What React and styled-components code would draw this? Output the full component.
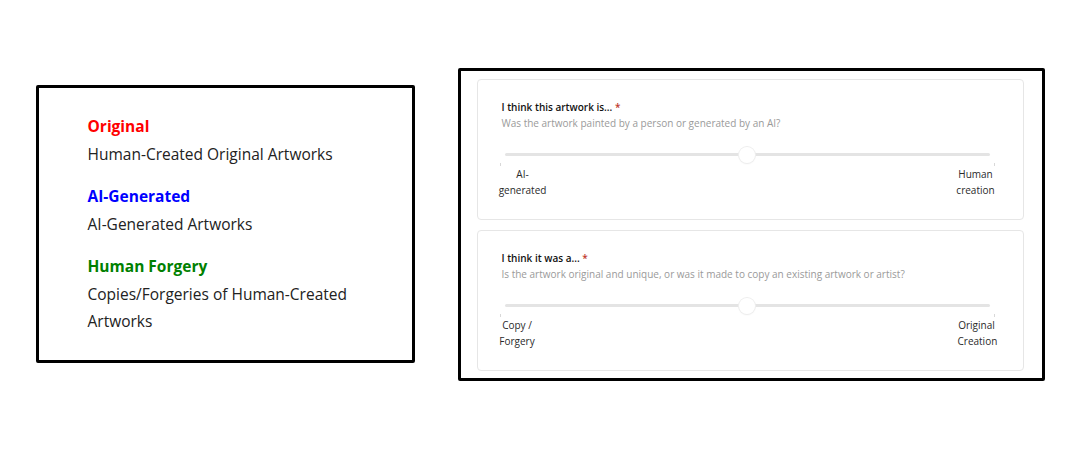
import React from "react";
import styled, { createGlobalStyle } from "styled-components";

const Global = createGlobalStyle`
  html, body { margin: 0; padding: 0; background: #fff; }
  body { font-family: "Open Sans", "Noto Sans", sans-serif; }
  * { box-sizing: border-box; }
`;

const Page = styled.div`
  width: 1080px;
  height: 450px;
  padding-bottom: 2px;
  display: flex;
  align-items: center;
  justify-content: center;
  gap: 43px;
`;

const LegendBox = styled.div`
  flex: none;
  width: 379px;
  height: 278px;
  border: 3px solid #000;
  border-radius: 2px;
  padding: 24px 40px 0 49px;
  display: flex;
  flex-direction: column;
  gap: 14px;
`;

const LegendGroup = styled.div`
  display: flex;
  flex-direction: column;
`;

const LegendTitle = styled.div`
  font-size: 15.5px;
  line-height: 29px;
  font-weight: 700;
  color: ${(p) => p.$color};
`;

const LegendDesc = styled.div`
  font-size: 15.5px;
  line-height: 27px;
  color: #222;
`;

const FormBox = styled.div`
  flex: none;
  width: 587px;
  height: 313px;
  border: 3px solid #000;
  border-radius: 2px;
  padding: 8px 18px 7px 16px;
  display: flex;
  flex-direction: column;
  gap: 10px;
`;

const Card = styled.div`
  height: 141px;
  border: 1px solid #e6e6e6;
  border-radius: 4px;
  padding: 20px 27px 0 21px;
  display: flex;
  flex-direction: column;
`;

const Header = styled.div`
  padding-left: 3px;
`;

const Question = styled.div`
  font-size: 10px;
  line-height: 15px;
  font-weight: 600;
  color: #111;
`;

const Required = styled.span`
  color: #c0392b;
`;

const Hint = styled.div`
  font-size: 10px;
  line-height: 16px;
  color: #9a9a9a;
`;

const Slider = styled.div`
  margin-top: 16px;
  display: flex;
  flex-direction: column;
`;

const TrackRow = styled.div`
  position: relative;
  height: 16px;
  margin: 0 6px;
  display: flex;
  align-items: center;
`;

const Track = styled.div`
  flex: 1;
  height: 3px;
  border-radius: 2px;
  background: #e4e4e4;
`;

const Thumb = styled.div`
  position: absolute;
  left: 50%;
  top: 0;
  width: 16px;
  height: 16px;
  margin-left: -8px;
  border-radius: 50%;
  background: #fff;
  box-shadow: 0 0 0 1px #eeeeee, 0 1px 2px rgba(0, 0, 0, 0.06);
`;

const Ticks = styled.div`
  display: flex;
  justify-content: space-between;
  height: 3px;
  padding: 0 1px;
`;

const Tick = styled.span`
  width: 1px;
  height: 3px;
  background: #d8d8d8;
`;

const Labels = styled.div`
  display: flex;
  justify-content: space-between;
  align-items: flex-start;
`;

const Label = styled.div`
  width: ${(p) => p.$w}px;
  text-align: center;
  font-size: 10px;
  line-height: 16px;
  color: #2a2a2a;
`;

function SliderQuestion({ question, hint, left, right, leftW, rightW }) {
  return (
    <Card>
      <Header>
        <Question>
          {question} <Required>*</Required>
        </Question>
        <Hint>{hint}</Hint>
      </Header>
      <Slider>
        <TrackRow>
          <Track />
          <Thumb />
        </TrackRow>
        <Ticks>
          <Tick />
          <Tick />
        </Ticks>
        <Labels>
          <Label $w={leftW}>
            {left.map((l) => (
              <div key={l}>{l}</div>
            ))}
          </Label>
          <Label $w={rightW}>
            {right.map((l) => (
              <div key={l}>{l}</div>
            ))}
          </Label>
        </Labels>
      </Slider>
    </Card>
  );
}

const legend = [
  { title: "Original", color: "#ff0000", desc: "Human-Created Original Artworks" },
  { title: "AI-Generated", color: "#0000ff", desc: "AI-Generated Artworks" },
  { title: "Human Forgery", color: "#008000", desc: "Copies/Forgeries of Human-Created Artworks" },
];

export default function App() {
  return (
    <>
      <Global />
      <Page>
        <LegendBox>
          {legend.map((g) => (
            <LegendGroup key={g.title}>
              <LegendTitle $color={g.color}>{g.title}</LegendTitle>
              <LegendDesc>{g.desc}</LegendDesc>
            </LegendGroup>
          ))}
        </LegendBox>
        <FormBox>
          <SliderQuestion
            question="I think this artwork is..."
            hint="Was the artwork painted by a person or generated by an AI?"
            left={["AI-", "generated"]}
            right={["Human", "creation"]}
            leftW={48}
            rightW={40}
          />
          <SliderQuestion
            question="I think it was a..."
            hint="Is the artwork original and unique, or was it made to copy an existing artwork or artist?"
            left={["Copy /", "Forgery"]}
            right={["Original", "Creation"]}
            leftW={37}
            rightW={38}
          />
        </FormBox>
      </Page>
    </>
  );
}
